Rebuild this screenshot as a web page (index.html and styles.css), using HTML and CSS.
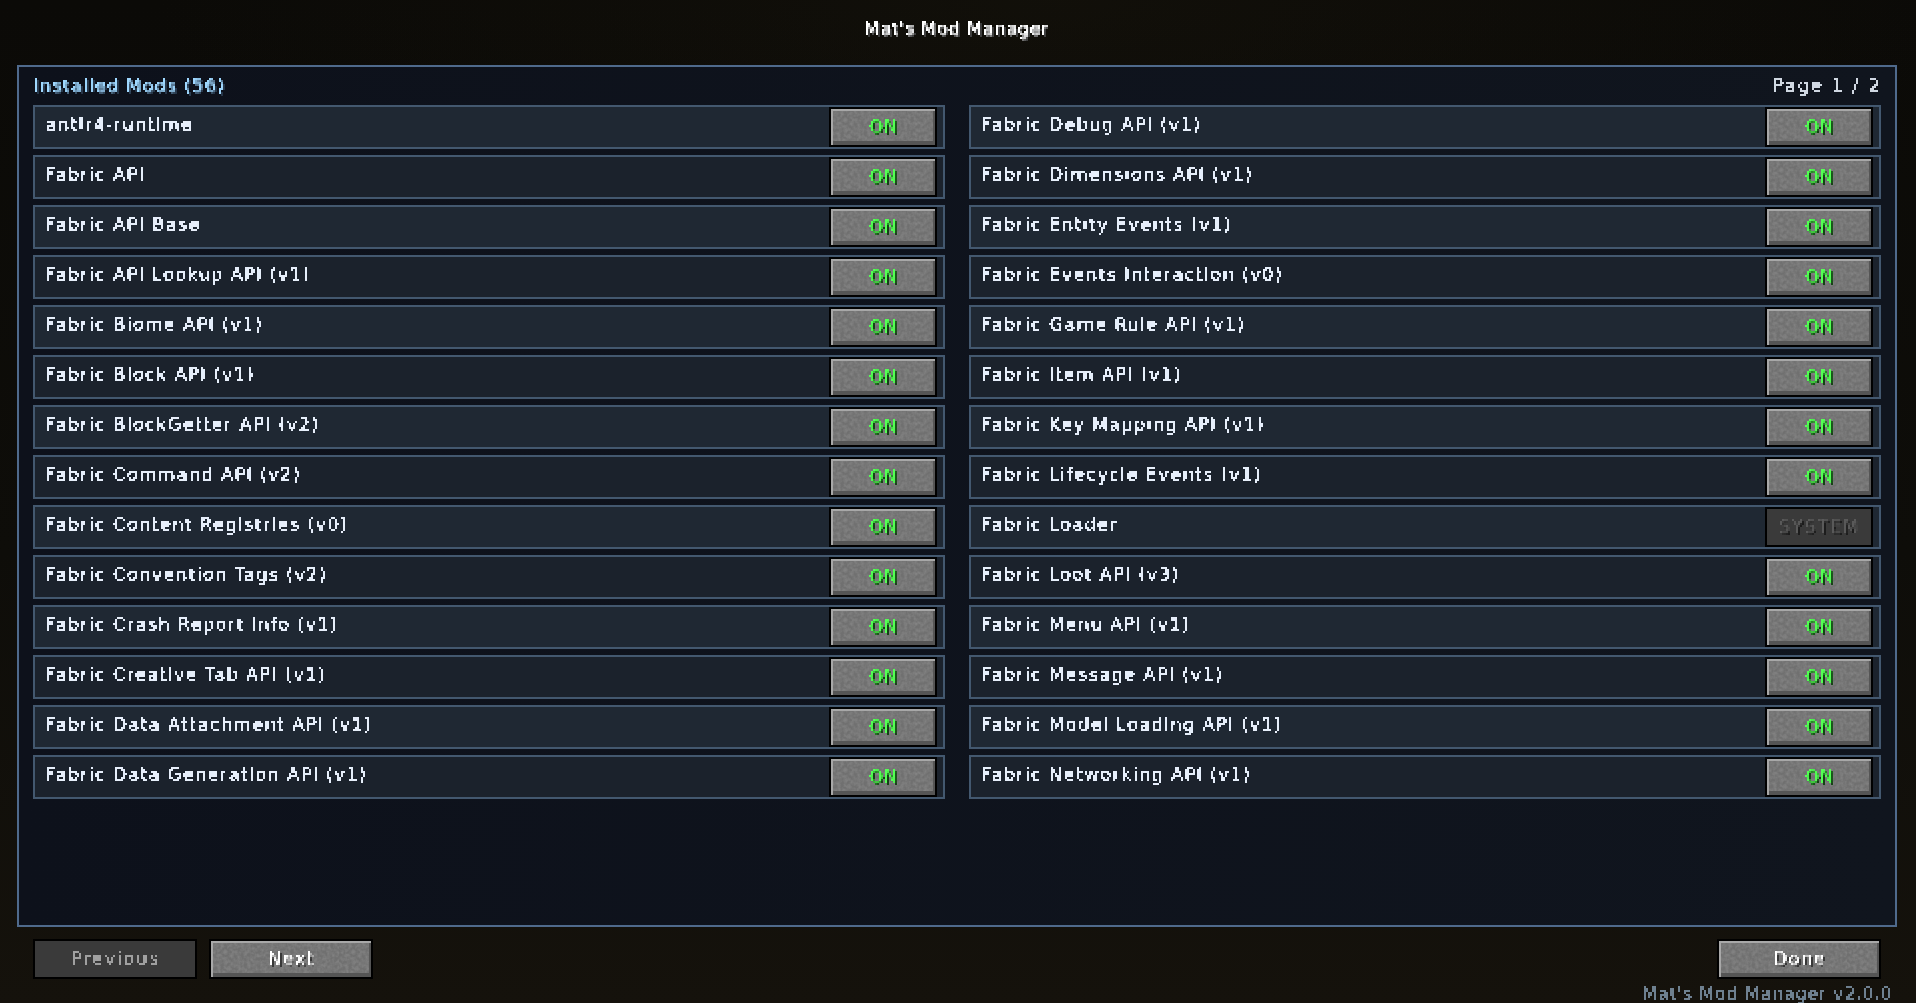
FILE: index.html
```html
<!DOCTYPE html>
<html lang="en">
<head>
<meta charset="utf-8">
<title>Mat's Mod Manager</title>
<link rel="stylesheet" href="styles.css">
</head>
<body>
<svg class="defs" width="0" height="0" aria-hidden="true">
  <filter id="px" x="0" y="0" width="100%" height="100%" primitiveUnits="userSpaceOnUse" color-interpolation-filters="sRGB">
    <feGaussianBlur in="SourceGraphic" stdDeviation="0.6 0.8" result="soft"/>
    <feFlood x="0" y="0" width="1" height="1" flood-color="#000" result="dot"/>
    <feComposite in="dot" in2="dot" operator="over" x="0" y="0" width="2" height="2" result="cell"/>
    <feTile in="cell" result="grid"/>
    <feComposite in="soft" in2="grid" operator="in" result="s"/>
    <feOffset in="s" dx="1" dy="0" result="s1"/>
    <feMerge result="a"><feMergeNode in="s"/><feMergeNode in="s1"/></feMerge>
    <feOffset in="a" dx="0" dy="1" result="a1"/>
    <feMerge result="b"><feMergeNode in="a"/><feMergeNode in="a1"/></feMerge>
    <feComponentTransfer in="b">
      <feFuncA type="discrete" tableValues="0 0 0 0 0 0 0 0 0 0 0 1 1 1 1 1 1 1 1 1 1 1 1 1 1 1"/>
    </feComponentTransfer>
  </filter>
</svg>
<main class="screen">
  <h1 class="title"><span class="px">Mat's Mod Manager</span></h1>
  <section class="panel">
    <header class="panel-head">
      <span class="px heading">Installed Mods (56)</span>
      <span class="px page">Page 1 / 2</span>
    </header>
    <div class="grid" id="grid"></div>
  </section>
  <footer class="foot">
    <button class="btn off prev"><span class="px">Previous</span></button>
    <button class="btn"><span class="px">Next</span></button>
    <button class="btn done"><span class="px">Done</span></button>
  </footer>
  <div class="version"><span class="px">Mat's Mod Manager v2.0.0</span></div>
</main>
<script src="app.js"></script>
</body>
</html>
```

FILE: app.js
```js
var mods = [
  "antlr4-runtime","Fabric API","Fabric API Base","Fabric API Lookup API (v1)","Fabric Biome API (v1)",
  "Fabric Block API (v1)","Fabric BlockGetter API (v2)","Fabric Command API (v2)","Fabric Content Registries (v0)",
  "Fabric Convention Tags (v2)","Fabric Crash Report Info (v1)","Fabric Creative Tab API (v1)",
  "Fabric Data Attachment API (v1)","Fabric Data Generation API (v1)",
  "Fabric Debug API (v1)","Fabric Dimensions API (v1)","Fabric Entity Events (v1)","Fabric Events Interaction (v0)",
  "Fabric Game Rule API (v1)","Fabric Item API (v1)","Fabric Key Mapping API (v1)","Fabric Lifecycle Events (v1)",
  "Fabric Loader","Fabric Loot API (v3)","Fabric Menu API (v1)","Fabric Message API (v1)",
  "Fabric Model Loading API (v1)","Fabric Networking API (v1)"
];
var grid = document.getElementById("grid");
mods.forEach(function (name) {
  var sys = name === "Fabric Loader";
  var row = document.createElement("div");
  row.className = "row";
  var label = document.createElement("span");
  label.className = "px name";
  label.textContent = name;
  var b = document.createElement("button");
  b.className = sys ? "btn toggle off sys" : "btn toggle on";
  var t = document.createElement("span");
  t.className = "px";
  t.textContent = sys ? "SYSTEM" : "ON";
  b.appendChild(t);
  row.appendChild(label);
  row.appendChild(b);
  grid.appendChild(row);
});
```

FILE: styles.css
```css
* { box-sizing: border-box; }
html, body { margin: 0; height: 100%; }
body {
  overflow: hidden;
  background:
    radial-gradient(900px 300px at 55% 0%, rgba(40, 34, 18, 0.22), transparent),
    linear-gradient(180deg, #0b0a07 0%, #0e0d09 55%, #15120c 100%);
  font-family: "DejaVu Sans", sans-serif;
  font-size: 18px;
  line-height: 22px;
}
.defs { position: absolute; }
.screen { width: 1916px; height: 1003px; display: flex; flex-direction: column; }
.px {
  display: inline-block;
  padding: 0 6px 4px 2px;
  margin: 0 -6px -4px -2px;
  filter: url(#px);
  letter-spacing: 1.2px;
  white-space: nowrap;
  -webkit-text-stroke: 0.25px currentColor;
}
.title {
  height: 65px;
  margin: 0;
  padding: 17px 4px 0 0;
  text-align: center;
  font: inherit;
  color: #fff;
  text-shadow: 2px 2px 0 #3f3f3f;
}
.title .px { letter-spacing: 0.5px; }
.panel {
  height: 862px;
  margin: 0 19px 0 17px;
  padding: 7px 14px 0;
  border: 2px solid #4f6a8c;
  background: linear-gradient(90deg, #0d111b, #10151e);
}
.panel-head { display: flex; justify-content: space-between; height: 31px; }
.heading { color: #9fd8ff; text-shadow: 2px 2px 0 #27374a; letter-spacing: 1px; }
.page { color: #d0d8e2; letter-spacing: 1.9px; }
.grid {
  display: grid;
  grid-template-rows: repeat(14, 44px);
  grid-auto-flow: column;
  grid-auto-columns: 912px;
  column-gap: 24px;
  row-gap: 6px;
}
.row {
  display: flex;
  justify-content: space-between;
  padding: 0 6px 0 10px;
  border: 2px solid #43586f;
  background: #1b222c;
}
.row:nth-child(odd) { background: #1f2833; }
.name { color: #e6eefa; margin-top: 6px; }
.btn {
  width: 164px;
  height: 40px;
  padding: 0 0 2px;
  border: 2px solid #000;
  font: inherit;
  color: #fff;
  text-shadow: 2px 2px 0 #383838;
  background-color: #707070;
  background-image: url("data:image/svg+xml,%3Csvg xmlns='http://www.w3.org/2000/svg' width='128' height='64'%3E%3Cfilter id='n' x='0' y='0' width='100%25' height='100%25'%3E%3CfeTurbulence type='fractalNoise' baseFrequency='.3' numOctaves='2' seed='4'/%3E%3CfeColorMatrix values='0 0 0 0 .52 0 0 0 0 .52 0 0 0 0 .52 .45 0 0 0 -.14'/%3E%3C/filter%3E%3Crect width='128' height='64' filter='url(%23n)'/%3E%3C/svg%3E");
  box-shadow: inset 2px 2px 0 #a8a8a8, inset -2px -4px 0 #555;
}
.toggle { width: 108px; }
.on { color: #55ff55; text-shadow: 2px 2px 0 #153f15; }
.on .px { letter-spacing: 0.6px; }
.off {
  background-color: #3a3a3a;
  background-image: none;
  box-shadow: none;
  color: #a0a0a0;
  text-shadow: none;
}
.prev .px { letter-spacing: 1.6px; }
.sys { color: #5a5a5a; text-shadow: 2px 2px 0 #1c1c1c; }
.sys .px { letter-spacing: 1.6px; }
.foot { display: flex; gap: 12px; padding: 12px 35px 0 33px; }
.done { margin-left: auto; }
.version {
  padding: 3px 24px 0 0;
  text-align: right;
  color: #6f8090;
  height: 22px;
}
.version .px { letter-spacing: 0.5px; }
```
